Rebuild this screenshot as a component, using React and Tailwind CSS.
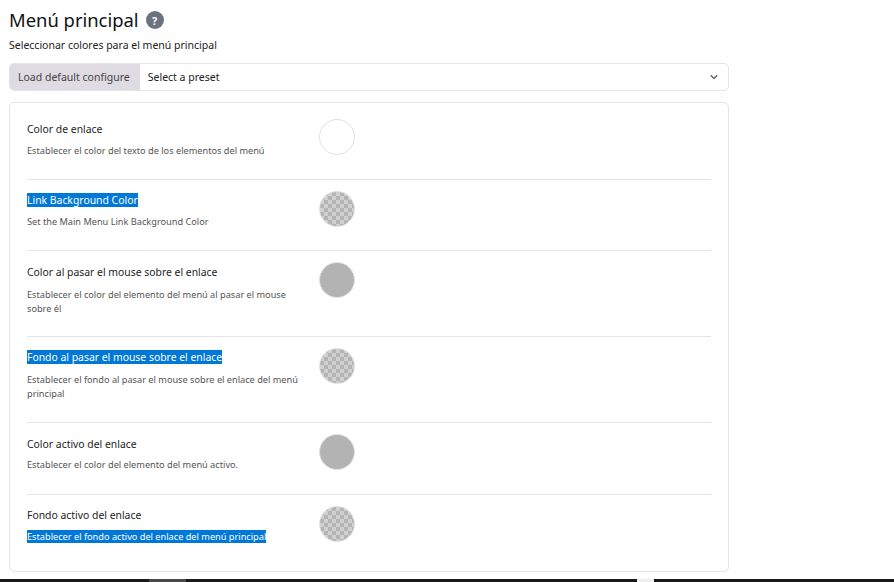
const checker = "bg-[conic-gradient(#b4b4b4_25%,#d0d0d0_0_50%,#b4b4b4_0_75%,#d0d0d0_0)] bg-[length:8px_8px]";

function Swatch({ kind }) {
  const fill =
    kind === "empty"
      ? "bg-white"
      : kind === "solid"
      ? "bg-[#b3b3b3]"
      : checker;
  return (
    <div className={`size-[36px] shrink-0 rounded-full border border-[#dee2e6] ${fill}`} />
  );
}

function Sel({ children }) {
  return <span className="bg-[#0078d7] text-white">{children}</span>;
}

const rows = [
  { t: "Color de enlace", d: "Establecer el color del texto de los elementos del menú", k: "empty", h: "h-[71px] pt-[10px]", tp: "pt-[2px]", mt: "mt-[7px]" },
  { t: <Sel>Link Background Color</Sel>, d: "Set the Main Menu Link Background Color", k: "check", h: "h-[71px] pt-[11px]", tp: "pt-[1px]", mt: "mt-[7px]" },
  { t: "Color al pasar el mouse sobre el enlace", d: "Establecer el color del elemento del menú al pasar el mouse sobre él", k: "solid", h: "h-[86px] pt-[11px]", tp: "pt-[2px]", mt: "mt-[8px]" },
  { t: <Sel>Fondo al pasar el mouse sobre el enlace</Sel>, d: "Establecer el fondo al pasar el mouse sobre el enlace del menú principal", k: "check", h: "h-[86px] pt-[11px]", tp: "pt-[1px]", mt: "mt-[8px]" },
  { t: "Color activo del enlace", d: "Establecer el color del elemento del menú activo.", k: "solid", h: "h-[72px] pt-[11px]", tp: "pt-[2px]", mt: "mt-[6px]" },
  { t: "Fondo activo del enlace", d: <Sel>Establecer el fondo activo del enlace del menú principal</Sel>, k: "check", h: "h-[71px] pt-[11px]", tp: "pt-[1px]", mt: "mt-[7px]", last: true },
];

export default function App() {
  return (
    <div className="h-[582px] w-[894px] overflow-hidden bg-white font-['Noto_Sans','Open_Sans',sans-serif] text-[#1a1a1a] flex flex-col">
      <div className="flex-1 pl-[9px] pt-[6px] w-[729px] box-content">
        <div className="flex items-center gap-[7px] h-[28px]">
          <h1 className="text-[18.4px] leading-[28px] text-[#111]">Menú principal</h1>
          <span className="flex size-[18px] items-center justify-center rounded-full bg-[#6b7280] text-[11px] font-bold leading-none text-white">?</span>
        </div>
        <p className="mt-[3px] text-[10.5px] leading-[16px] text-[#222]">Seleccionar colores para el menú principal</p>
        <div className="mt-[10px] flex h-[28px] w-[720px] overflow-hidden rounded-[5px] border border-[#e3e3e8]">
          <div className="flex items-center bg-[#dfdbe3] pl-[9px] pr-[10px] pt-[2px] -my-px -ml-px text-[10.5px] text-[#444]">Load default configure</div>
          <div className="flex flex-1 items-center justify-between pl-[8px] pr-[10px] pt-[2px] text-[10.5px] text-[#222]">
            <span>Select a preset</span>
            <svg className="-mt-[3px]" width="8" height="6" viewBox="0 0 8 6" fill="none" stroke="#666" strokeWidth="1.4"><path d="M.8 1.2L4 4.4l3.2-3.2" /></svg>
          </div>
        </div>
        <div className="mt-[11px] h-[470px] w-[720px] rounded-[5px] border border-[#e3e3e8] px-[17px] pt-[6px]">
          {rows.map((r, i) => (
            <div key={i} className={`flex ${r.h} ${r.last ? "" : "border-b border-[#e3e3e8]"}`}>
              <div className={`w-[275px] mr-[17px] shrink-0 ${r.tp}`}>
                <div className="text-[10.4px] leading-[16px] text-[#222]">{r.t}</div>
                <div className={`${r.mt} text-[9.2px] leading-[14px] text-[#555]`}>{r.d}</div>
              </div>
              <Swatch kind={r.k} />
            </div>
          ))}
        </div>
      </div>
      <div className="flex h-[3px] bg-[#1a1a1a]">
        <div className="ml-[149px] w-[37px] bg-[#4a4a4a]" />
        <div className="ml-[451px] w-[17px] bg-[#eeeeee]" />
      </div>
    </div>
  );
}
